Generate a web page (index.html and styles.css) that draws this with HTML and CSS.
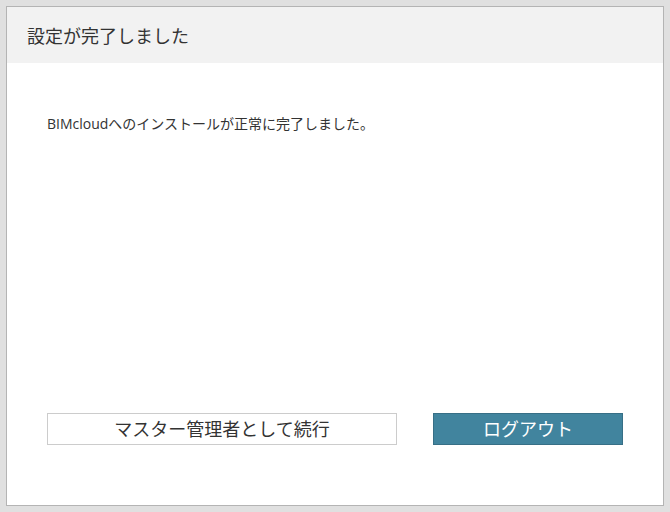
FILE: index.html
```html
<!DOCTYPE html>
<html lang="ja">
<head>
<meta charset="utf-8">
<link rel="stylesheet" href="styles.css">
</head>
<body>
<div class="dialog">
  <div class="header">設定が完了しました</div>
  <div class="content">
    <p class="message">BIMcloudへのインストールが正常に完了しました。</p>
    <div class="actions">
      <button class="btn btn-secondary">マスター管理者として続行</button>
      <button class="btn btn-primary">ログアウト</button>
    </div>
  </div>
</div>
</body>
</html>
```
FILE: styles.css
```css
html, body {
  margin: 0;
  padding: 0;
  height: 100%;
}
body {
  background: #e0e0e0;
  font-family: "Open Sans", "Noto Sans CJK JP", sans-serif;
  padding: 6px;
  box-sizing: border-box;
}
.dialog {
  width: 658px;
  height: 500px;
  box-sizing: border-box;
  border: 1px solid #b4b4b4;
  background: #fff;
  display: flex;
  flex-direction: column;
}
.header {
  background: #f2f2f2;
  height: 56px;
  box-sizing: border-box;
  padding-left: 20px;
  display: flex;
  align-items: center;
  font-size: 18px;
  color: #333;
}
.content {
  flex: 1;
  display: flex;
  flex-direction: column;
  padding: 0 40px 0 40px;
}
.message {
  margin: 52px 0 0 0;
  font-size: 14px;
  color: #333;
  line-height: 18px;
}
.actions {
  margin-top: auto;
  margin-bottom: 60px;
  display: flex;
  justify-content: space-between;
}
.btn {
  height: 32px;
  box-sizing: border-box;
  font-family: "Open Sans", "Noto Sans CJK JP", sans-serif;
  font-size: 18px;
  padding: 0;
  line-height: 28px;
  cursor: pointer;
}
.btn-secondary {
  width: 350px;
  background: #fff;
  border: 1px solid #cccccc;
  color: #333;
}
.btn-primary {
  width: 190px;
  background: #41849e;
  border: 1px solid #376f86;
  color: #fff;
}
```
